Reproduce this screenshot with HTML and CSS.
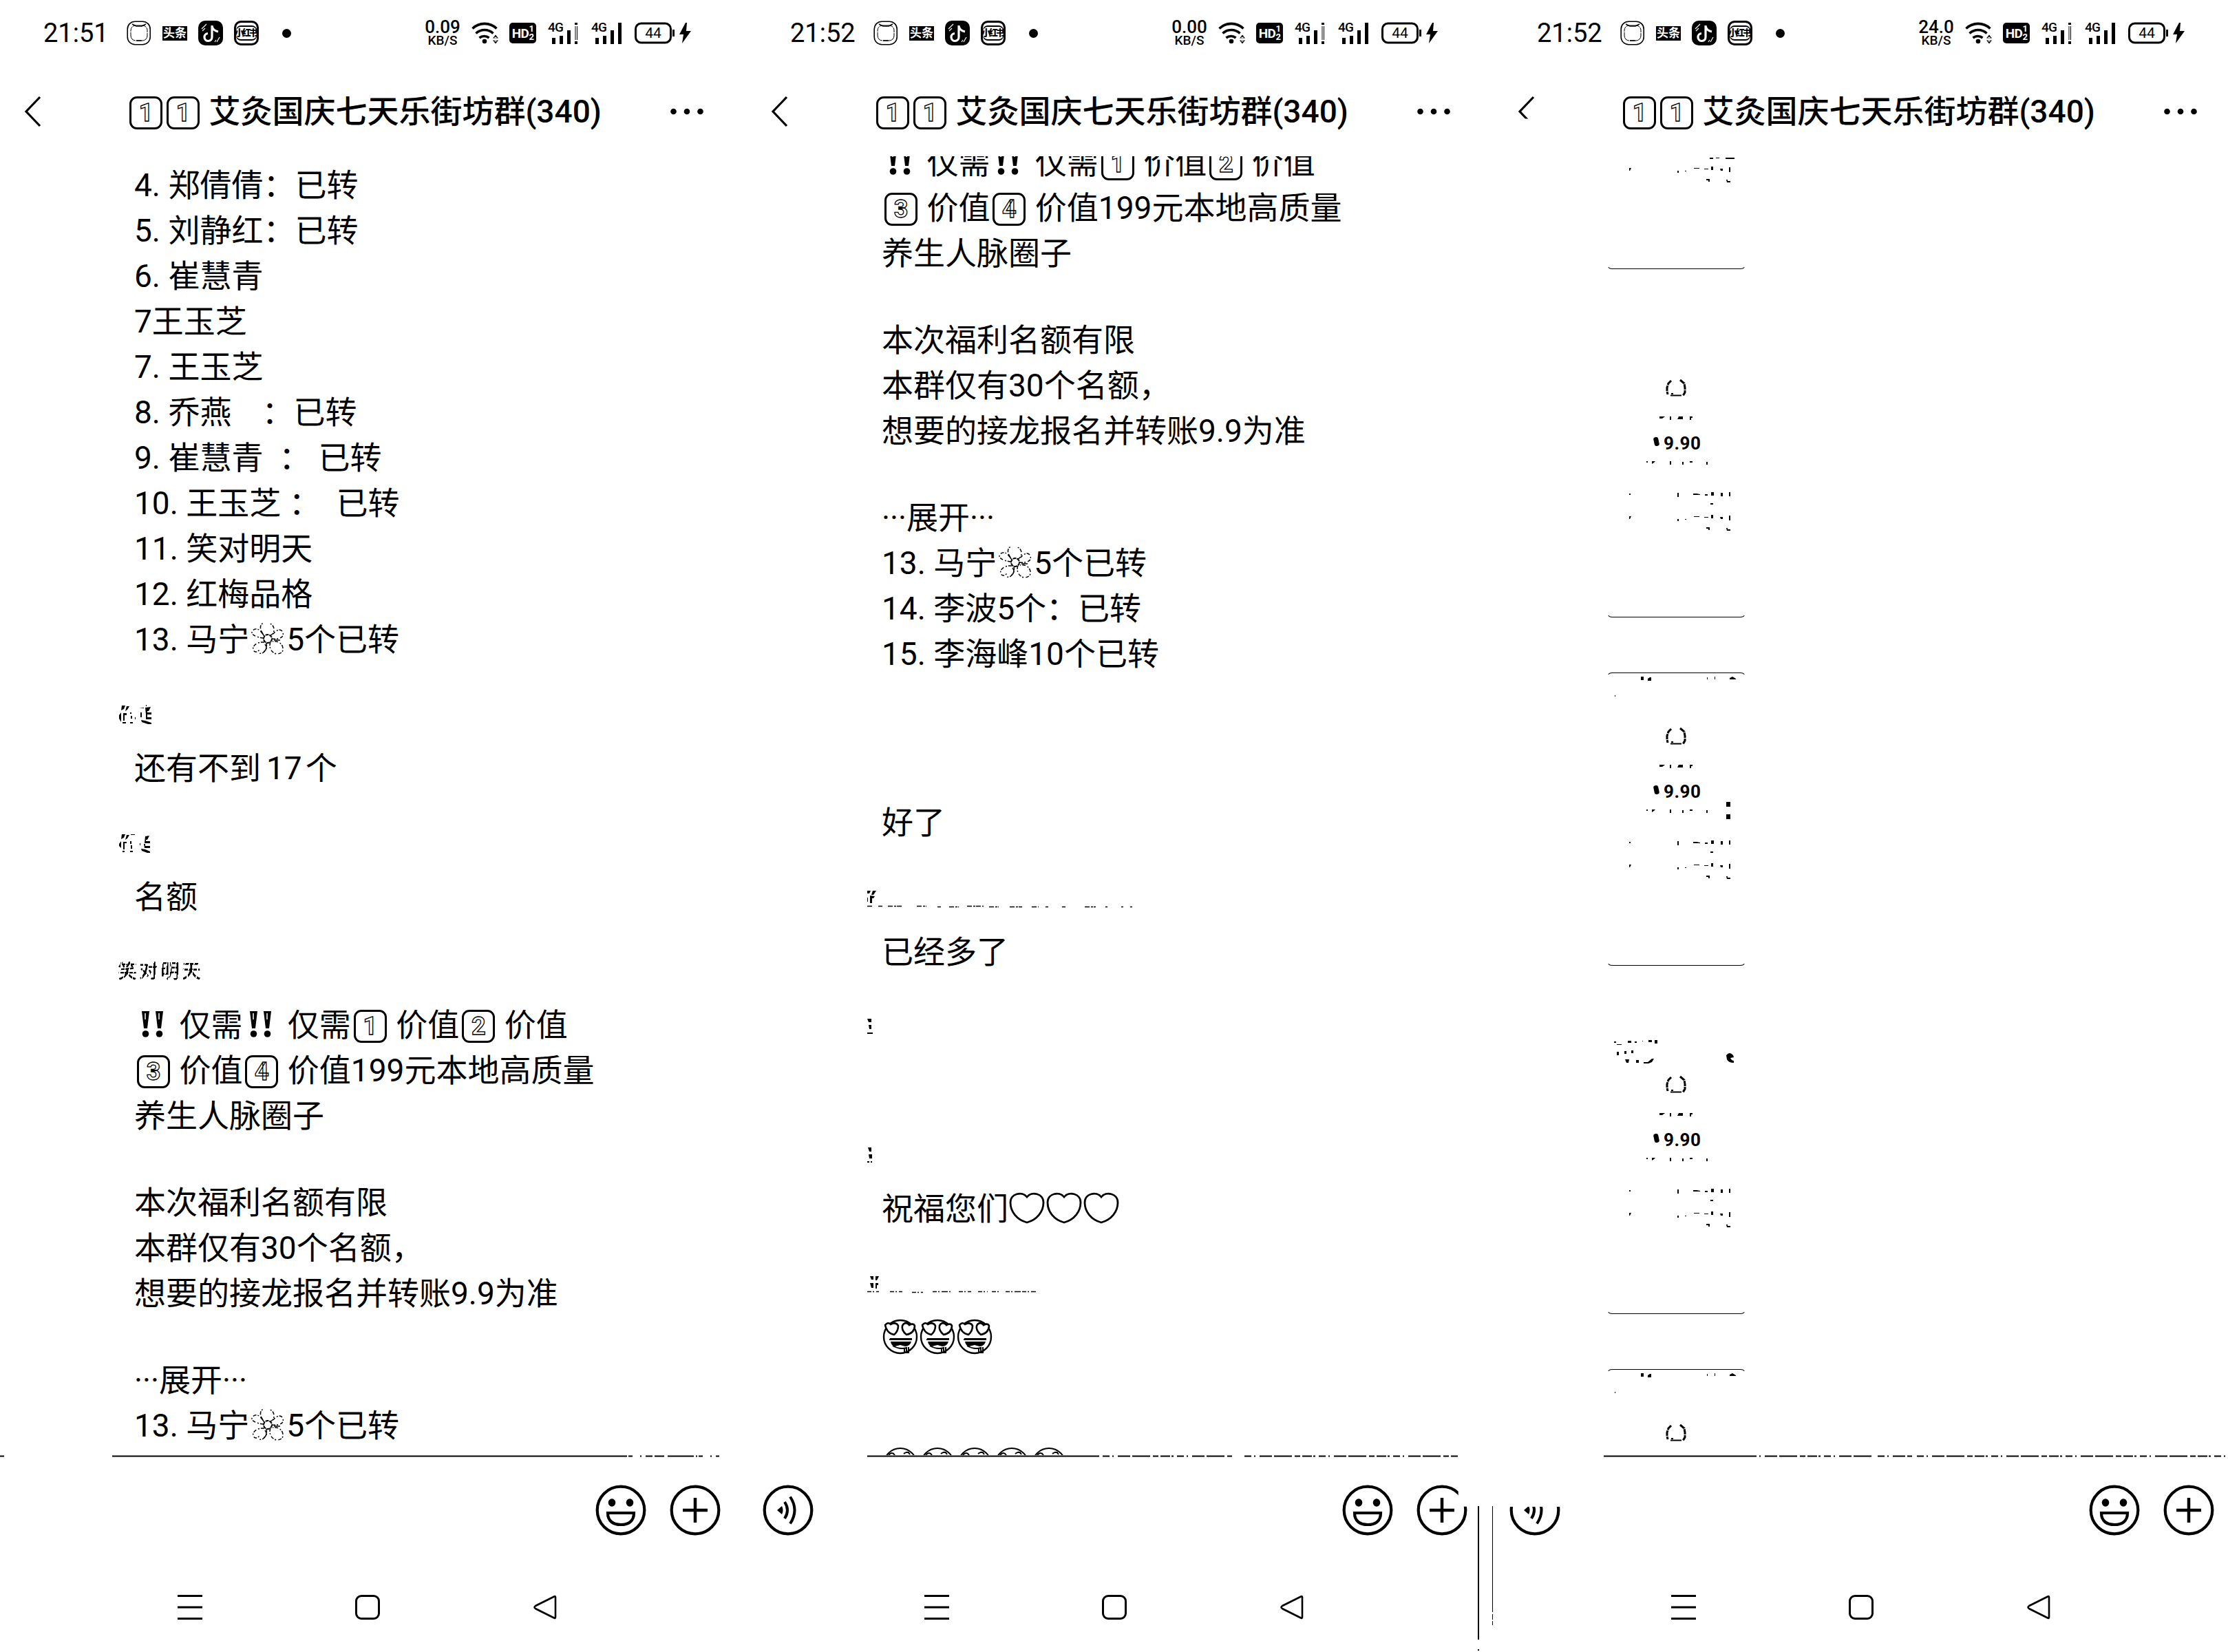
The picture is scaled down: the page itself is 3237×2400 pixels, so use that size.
FILE: index.html
```html
<!DOCTYPE html>
<html lang="zh-CN">
<head>
<meta charset="utf-8">
<title>艾灸国庆七天乐街坊群</title>
<link rel="stylesheet" href="styles.css">
</head>
<body>
<svg class="defs" aria-hidden="true">
  <symbol id="app1" viewBox="0 0 36 36"><rect x="1.2" y="1.2" width="33" height="33.5" rx="11" fill="none" stroke="#000" stroke-width="1.600"/><rect x="6" y="7" width="24" height="22" rx="7" fill="none" stroke="#000" stroke-width="1" stroke-dasharray="16 1 7 1"/><path d="M8 5l6 3h8l6-3M14 29h8" fill="none" stroke="#000" stroke-width="1.500"/></symbol>
  <symbol id="tiktok" viewBox="0 0 36 36"><rect width="36" height="36" rx="10"/><path d="M20 7v17a5.500 5.500 0 1 1-6-5.500M20 8c1 5 4 7 9 8" fill="none" stroke="#fff" stroke-width="3.200"/><path d="M5 12l7-7M6 15l4-4M27 31l4-7M24 31l2-3" stroke="#fff" stroke-width="1.200"/></symbol>
  <symbol id="wifi" viewBox="0 0 42 32"><g fill="none" stroke="#000" stroke-width="3.600"><path d="M1.500 9.500a25 25 0 0 1 35 0"/><path d="M6.500 16.500a18 18 0 0 1 25 0"/><path d="M11.500 23a11 11 0 0 1 14 0"/></g><circle cx="19" cy="28" r="3.300"/><path d="M31 23.500l4-5 4 5zM31 26.500l4 5 4-5z"/><path d="M33.500 22.500h3M33.500 27.500h3" stroke="#fff" stroke-width="1.500"/></symbol>
  <symbol id="bars-low" viewBox="0 0 46 32"><path d="M6 23h5v9H6zM17 20h5v12h-5zM28 12h5v20h-5z"/><path d="M39 1h4v3h-4zM39.500 6h1v20h-1zM42 6h1v20h-1zM39 28h4v4h-4z"/></symbol>
  <symbol id="bars" viewBox="0 0 46 32"><path d="M6 23h5v9H6zM17 20h5v12h-5zM28 12h5v20h-5zM39 1h5v31h-5z"/></symbol>
  <symbol id="battery" viewBox="0 0 84 32"><rect x="1.500" y="2" width="51" height="28" rx="8" fill="none" stroke="#000" stroke-width="3"/><path d="M55 11h3v10h-3z"/><path d="M74 1L65 18h6l-2 13 13-18h-7l1-12z"/></symbol>
  <symbol id="back" viewBox="0 0 26 48"><path d="M23 3L3 24l20 21" fill="none" stroke="#000" stroke-width="3.200"/></symbol>
  <symbol id="more" viewBox="0 0 50 12"><circle cx="5.500" cy="6" r="4.300"/><circle cx="25" cy="6" r="4.300"/><circle cx="44.500" cy="6" r="4.300"/></symbol>
  <symbol id="smile" viewBox="0 0 74 74"><circle cx="37" cy="37" r="34.300" fill="none" stroke="#000" stroke-width="4.200"/><ellipse cx="24" cy="26" rx="5.300" ry="5.800"/><ellipse cx="50" cy="26" rx="5.300" ry="5.800"/><path d="M18 41h38c0 12-8 17-19 17s-19-5-19-17z" fill="none" stroke="#000" stroke-width="4.200"/></symbol>
  <symbol id="plus" viewBox="0 0 74 74"><circle cx="37" cy="37" r="34.300" fill="none" stroke="#000" stroke-width="4.200"/><path d="M19 37h36M37 19v36" stroke="#000" stroke-width="4.500"/></symbol>
  <symbol id="voice" viewBox="0 0 74 74"><circle cx="37" cy="37" r="34.300" fill="none" stroke="#000" stroke-width="4.200"/><path d="M21 37l7-6q3 6 0 12z"/><path d="M32 25q8 12 0 24M40 17.500q13 19.500 0 39" fill="none" stroke="#000" stroke-width="4"/></symbol>
  <symbol id="menu" viewBox="0 0 36 36"><path d="M0 1.500h36M0 18h36M0 34.500h36" stroke="#000" stroke-width="3"/></symbol>
  <symbol id="home" viewBox="0 0 36 36"><rect x="1.500" y="1.500" width="33" height="33" rx="7.500" fill="none" stroke="#000" stroke-width="3"/></symbol>
  <symbol id="prev" viewBox="0 0 36 36"><path d="M33 3.500v29q0 2-2 1L4 20q-3-2 0-4L31 2.500q2-1 2 1z" fill="none" stroke="#000" stroke-width="2.600"/></symbol>
  <symbol id="bang" viewBox="0 0 48 48"><path d="M8 5h11l-3 25h-5zM28 5h11l-3 25h-5z"/><circle cx="13.500" cy="38" r="4.800"/><circle cx="33.500" cy="38" r="4.800"/><path d="M13 8v9M33 8v9" stroke="#fff" stroke-width="1.500"/></symbol>
  <symbol id="flower" viewBox="0 0 48 48"><g fill="none" stroke="#000" stroke-width="1.500"><circle cx="24" cy="24" r="6" stroke-width="2" stroke-dasharray="5 1"/><path stroke-dasharray="5 2 2 3" d="M19 20C10 10 14 1 17 2M28 19c8-3 6-17-2-17M18 23C6 22-2 17 2 12q7-6 14 4M30 24c11 1 18-2 16-9-2-6-9-5-14 2M19 29c-10-1-18 5-16 11 2 5 6 3 9 0M22 30c2 8-3 17-11 15M28 29c-3 6 1 16 9 17 8 0 11-5 8-12-3-5-7-7-14-6"/><path d="M20 32q5 6-2 11M33 26h9M17 17l-3-5"/></g></symbol>
  <symbol id="heart" viewBox="0 0 54 48"><path d="M27 45C12 41 3 29 3 16 3 3 20-1 27 8 34-1 51 3 51 16c0 13-9 25-24 29z" fill="none" stroke="#000" stroke-width="2.800"/></symbol>
  <symbol id="love" viewBox="0 0 52 52"><circle cx="26" cy="26" r="24" fill="none" stroke="#000" stroke-width="2.400"/><g fill="#fff" stroke="#000" stroke-width="2.600"><path d="M17 23C10 22 5 16 4 9q4-5 8-1 8-4 11 2 0 8-6 13zM35 23c-6-5-7-9-6-13 3-6 8-4 10-1q6-3 8 1c0 7-5 12-12 13z"/></g><path d="M11 28h32v3H11zM12 33h30q-2 7-9 7l-7-2-8 2q-5-1-6-7z"/><path d="M10 30h33M15 39q10 6 20 3v7M32 42v7M38 41v8h-6" fill="none" stroke="#000" stroke-width="2"/></symbol>
  <symbol id="blush" viewBox="0 0 52 52"><circle cx="26" cy="26" r="24" fill="none" stroke="#000" stroke-width="2"/><path d="M9 12q5-6 9 0M31 10q6-5 9 1M17 13.500h4M34 8h5" fill="none" stroke="#000" stroke-width="2"/></symbol>
  <symbol id="card-info" viewBox="0 0 203 426"><g fill="none" stroke="#000">
    <path d="M94 82l-4 4-2 6v5l1 5M107 81l6 5 1 6v7l-3 5" stroke-width="3" stroke-dasharray="8 1"/><path d="M93 103.500h16" stroke-width="2"/><path d="M94 101h3" stroke-width="2"/></g>
    <path d="M77 134h8l-4 3h-4zM92 134h2v5h-2zM105 134h6v4h-8zM121 134h4v2h-2v3h-2z"/>
    <path d="M58 199h2v2h-2zM66 199h5l-2 2-3 2zM92 199h2v5h-2zM110 200h2v4h-2zM121 199h4v2h-4zM145 200h2v4h-2z"/>
    <path d="M33 246h2v2h-2zM103 245h2v6h-2zM126 246h5l5 1v1h-10zM143 247h4v2h-4zM152 244h4v5h-4zM166 245h3v5h-3zM178 244h2v6h-2zM151 260h4v2h-4zM33 279h3l-2 4h-1zM103 283h2v3h-2zM114 283h2v1h-2zM127 279h8v1h-8zM142 280h6v1h-6zM152 277h3v5h-3zM165 280h4v3h-3zM178 278h2v7h-2zM145 295h5v4h-2v-2h-3zM174 296h2v2h4v2h-5z"/>
  </symbol>
  <symbol id="card-top" viewBox="0 0 203 426"><path d="M50 6h4v5h-4zM60 9l3-2h2v5h-5zM146 7h1v3h-1zM157 6h1v4h-1zM179 8l4-2 5 3v1h-9zM12 33h1v2h-1z"/></symbol>
</svg>

<main class="shots">
  <section class="phone">
    <header class="status">
      <span class="clock">21:51</span>
      <svg class="app"><use href="#app1"/></svg><span class="toutiao">头条</span><svg class="app"><use href="#tiktok"/></svg><span class="xhs">小红书</span><i class="dot"></i>
      <span class="speed"><b>0.09</b><small>KB/S</small></span>
      <svg class="wifi"><use href="#wifi"/></svg><span class="hd">HD<span class="sims"><i>1</i><i>2</i></span></span>
      <span class="signal"><svg><use href="#bars-low"/></svg><em>4G</em></span><span class="signal"><svg><use href="#bars"/></svg><em>4G</em></span>
      <span class="battery"><svg><use href="#battery"/></svg><em>44</em></span>
    </header>
    <div class="titlebar">
      <svg class="back"><use href="#back"/></svg>
      <h1><span class="key">1</span><span class="key">1</span> 艾灸国庆七天乐街坊群(340)</h1>
      <svg class="more"><use href="#more"/></svg>
    </div>
    <div class="feed feed-a">
      <div class="msg">
        <p>4. 郑倩倩：已转</p><p>5. 刘静红：已转</p><p>6. 崔慧青</p><p>7王玉芝</p><p>7. 王玉芝</p><p>8. 乔燕<span class="gap"></span>：已转</p><p>9. 崔慧青  ： 已转</p><p>10. 王玉芝 ：  已转</p><p>11. 笑对明天</p><p>12. 红梅品格</p><p>13. 马宁<svg class="emo"><use href="#flower"/></svg>5个已转</p>
      </div>
      <svg class="faint" viewBox="0 0 60 30"><path d="M6 1h5l-2 5-4 2zM13 2h4l-3 5-3 2zM2 15l3-4v14l-3-5zM8 12h5v3h-3v8H8zM18 11h2v2h-2zM19 16h2v4h-2zM7 25h5v2H7zM18 25h4v2h-4zM31 5l7-1v1zM33 11h2v7h-2zM40 4l8-1-3 6h-2v2h6v3h-8zM41 14h2v4h6v3h-8zM34 22l6 1 9 3v2h-5l-9-3zM25 18h1v3h-1zM41 0h1v2h-1z"/></svg>
      <div class="msg"><p>还有不到<span class="num">17</span>个</p></div>
      <svg class="faint" viewBox="0 0 60 30"><path d="M6 1h5l-2 5-4 2zM13 2h4l-3 5-3 2zM2 15l3-4v10l-3-3zM8 12h5v2h-3v9H8zM18 11h2v4h-2zM19 17h2v5h-2zM7 25h3v2H7zM18 25h4v2h-4zM19 1h6v1h-6zM32 14h1v3h-1zM40 4l6-1-3 6h-2v2h6v3h-8zM38 15h2v3h7v3h-8zM34 22l6 1 7 3v2h-4l-8-3z"/></svg>
      <div class="msg"><p>名额</p></div>
      <div class="sender">笑对明天</div>
      <div class="msg">
        <p><svg class="emo"><use href="#bang"/></svg> 仅需<svg class="emo"><use href="#bang"/></svg> 仅需<span class="key">1</span> 价值<span class="key">2</span> 价值</p><p><span class="key">3</span> 价值<span class="key">4</span> 价值199元本地高质量</p><p>养生人脉圈子</p><p class="blank"></p><p>本次福利名额有限</p><p>本群仅有30个名额，</p><p>想要的接龙报名并转账9.9为准</p><p class="blank"></p><p><span class="dots">···</span>展开<span class="dots">···</span></p><p>13. 马宁<svg class="emo"><use href="#flower"/></svg>5个已转</p>
      </div>
    </div>
    <svg class="rule" viewBox="0 0 1085 4"><path d="M0 1.500h6M163 1.500h746" stroke="#000" stroke-width="2"/><path d="M909 1.500h136" stroke="#000" stroke-width="2" stroke-dasharray="2 2 6 11 2 6 10 3 14 5 38 3"/></svg>
    <footer class="input"><svg><use href="#smile"/></svg><svg><use href="#plus"/></svg></footer>
    <nav class="nav"><svg><use href="#menu"/></svg><svg><use href="#home"/></svg><svg><use href="#prev"/></svg></nav>
  </section>

  <section class="phone">
    <header class="status">
      <span class="clock">21:52</span>
      <svg class="app"><use href="#app1"/></svg><span class="toutiao">头条</span><svg class="app"><use href="#tiktok"/></svg><span class="xhs">小红书</span><i class="dot"></i>
      <span class="speed"><b>0.00</b><small>KB/S</small></span>
      <svg class="wifi"><use href="#wifi"/></svg><span class="hd">HD<span class="sims"><i>1</i><i>2</i></span></span>
      <span class="signal"><svg><use href="#bars-low"/></svg><em>4G</em></span><span class="signal"><svg><use href="#bars"/></svg><em>4G</em></span>
      <span class="battery"><svg><use href="#battery"/></svg><em>44</em></span>
    </header>
    <div class="titlebar">
      <svg class="back"><use href="#back"/></svg>
      <h1><span class="key">1</span><span class="key">1</span> 艾灸国庆七天乐街坊群(340)</h1>
      <svg class="more"><use href="#more"/></svg>
    </div>
    <div class="feed feed-b">
      <div class="msg">
        <p><svg class="emo"><use href="#bang"/></svg> 仅需<svg class="emo"><use href="#bang"/></svg> 仅需<span class="key">1</span> 价值<span class="key">2</span> 价值</p><p><span class="key">3</span> 价值<span class="key">4</span> 价值199元本地高质量</p><p>养生人脉圈子</p><p class="blank"></p><p>本次福利名额有限</p><p>本群仅有30个名额，</p><p>想要的接龙报名并转账9.9为准</p><p class="blank"></p><p><span class="dots">···</span>展开<span class="dots">···</span></p><p>13. 马宁<svg class="emo"><use href="#flower"/></svg>5个已转</p><p>14. 李波5个：已转</p><p>15. 李海峰10个已转</p>
      </div>
      <div class="msg m-ok"><p>好了</p></div>
      <svg class="trace t1" viewBox="0 0 400 30"><path d="M0 3h5l-2 4H0zM8 3h5l-4 6H6zM4 10l7 1-2 3H7v7H4zM0 13h1v6H0z"/><path d="M0 25.500h8m8 0h6m8 0h22m20 0h14m16 1h5m12 0h14m12-1h24m8 1h14m16 0h18m14 0h10m10 0h4m20 0h5m28 0h16m14 0h3m20 0h3m10 0h3" fill="none" stroke="#000" stroke-width="1.500" stroke-dasharray="7 2 3 1"/></svg>
      <div class="msg m-many"><p>已经多了</p></div>
      <svg class="trace t2" viewBox="0 0 400 30"><path d="M0 3h6v5H2zM2 12h4v6H3zM0 23h8v2H0z"/></svg>
      <svg class="trace t3" viewBox="0 0 400 30"><path d="M1 3h5v6H3zM2 13h5v6H3zM0 23h3v2H0zM5 23h2v2H5z"/></svg>
      <div class="msg m-bless"><p>祝福您们<svg class="emo wide"><use href="#heart"/></svg><svg class="emo wide"><use href="#heart"/></svg><svg class="emo wide"><use href="#heart"/></svg></p></div>
      <svg class="trace t4" viewBox="0 0 400 30"><path d="M4 3h5v5H6zM12 3h5l-3 6h-2zM4 13h5v7H6zM12 13h4v3h-2v5h-2z"/><path d="M0 25.500h17m16 0h18m14 1h16m14-1h26m12 0h18m10 0h14m6 0h10m10 0h44" fill="none" stroke="#000" stroke-width="1.500" stroke-dasharray="6 2 2 3 9 2"/></svg>
      <div class="msg m-face"><p><svg class="emo face"><use href="#love"/></svg><svg class="emo face"><use href="#love"/></svg><svg class="emo face"><use href="#love"/></svg></p></div>
      <div class="msg m-cut"><p><svg class="emo face"><use href="#blush"/></svg><svg class="emo face"><use href="#blush"/></svg><svg class="emo face"><use href="#blush"/></svg><svg class="emo face"><use href="#blush"/></svg><svg class="emo face"><use href="#blush"/></svg></p></div>
    </div>
    <svg class="rule" viewBox="0 0 1085 4"><path d="M175 1.500h337" stroke="#000" stroke-width="2"/><path d="M517 1.500h188M723 1.500h310" stroke="#000" stroke-width="2" stroke-dasharray="10 4 2 6 18 3 26 4 8 3 14 2 3 5"/></svg>
    <footer class="input with-voice"><svg class="voice"><use href="#voice"/></svg><svg><use href="#smile"/></svg><svg class="clipped"><use href="#plus"/></svg></footer>
    <nav class="nav"><svg><use href="#menu"/></svg><svg><use href="#home"/></svg><svg><use href="#prev"/></svg></nav>
    <svg class="seam" viewBox="0 0 24 214"><path d="M2 0v194M2 208v2" stroke="#000" stroke-width="2"/><path d="M22.500 0v154M22.500 157v8M22.500 167v6" stroke="#000" stroke-width="1"/></svg>
  </section>

  <section class="phone last">
    <header class="status">
      <span class="clock">21:52</span>
      <svg class="app"><use href="#app1"/></svg><span class="toutiao">头条</span><svg class="app"><use href="#tiktok"/></svg><span class="xhs">小红书</span><i class="dot"></i>
      <span class="speed"><b>24.0</b><small>KB/S</small></span>
      <svg class="wifi"><use href="#wifi"/></svg><span class="hd">HD<span class="sims"><i>1</i><i>2</i></span></span>
      <span class="signal"><svg><use href="#bars-low"/></svg><em>4G</em></span><span class="signal"><svg><use href="#bars"/></svg><em>4G</em></span>
      <span class="battery"><svg><use href="#battery"/></svg><em>44</em></span>
    </header>
    <div class="titlebar">
      <svg class="back short"><use href="#back"/></svg>
      <h1><span class="key">1</span><span class="key">1</span> 艾灸国庆七天乐街坊群(340)</h1>
      <svg class="more"><use href="#more"/></svg>
    </div>
    <div class="feed feed-c">
      <article class="card open"><svg viewBox="0 0 203 426"><use href="#card-info"/><path d="M150 264h5v2h-5zM159 264h5v1h-5zM173 264h13v2h-13z"/></svg></article>
      <article class="card open"><svg viewBox="0 0 203 426"><use href="#card-info"/></svg><span class="price">9.90</span></article>
      <article class="card"><svg viewBox="0 0 203 426"><use href="#card-info"/><use href="#card-top"/><path d="M174 188h6v7h-6zM174 206h6v7h-6z"/></svg><span class="price">9.90</span></article>
      <article class="card open"><svg viewBox="0 0 203 426"><use href="#card-info"/><path d="M11 30h3v2h-3zM15 34h7v1h-7zM31 29h5v3h-5zM41 30h3v2h-3zM52 29h1v1h-1zM61 28h5v3h-5zM70 28h4v5h-4zM15 45h3v5h-3zM26 44h3v4h-3zM36 43h3v4h-3zM27 56h6l-1 5h-3zM43 57h4v4h-4zM54 60h6l6-5h3l-3 5-5 2h-7z"/><path d="M174 50q5-6 10 0l1 3-5 1q2 4 5 4v3q-8 0-10-5z"/></svg><span class="price">9.90</span></article>
      <article class="card"><svg viewBox="0 0 203 426"><use href="#card-info"/><use href="#card-top"/></svg></article>
    </div>
    <svg class="rule" viewBox="0 0 1085 4"><path d="M160 1.500h212" stroke="#000" stroke-width="2"/><path d="M372 1.500h180M558 1.500h50M615 1.500h452" stroke="#000" stroke-width="2" stroke-dasharray="10 4 2 6 18 3 26 4 8 3 14 2 3 5"/></svg>
    <footer class="input with-voice"><svg class="voice cut-top"><use href="#voice"/></svg><svg><use href="#smile"/></svg><svg><use href="#plus"/></svg></footer>
    <nav class="nav"><svg><use href="#menu"/></svg><svg><use href="#home"/></svg><svg><use href="#prev"/></svg></nav>
  </section>
</main>
</body>
</html>
```
FILE: styles.css
```css
* { box-sizing: border-box; }
body { margin: 0; background: #fff; color: #000; font-family: Roboto, "Noto Sans CJK SC", sans-serif; }
p, h1 { margin: 0; }
i, em { font-style: normal; }
svg { display: block; flex: none; }
.defs { position: absolute; width: 0; height: 0; }

.shots { display: grid; grid-template-columns: 1085px 1085px 1067px; width: 3237px; height: 2400px; overflow: hidden; }
.phone { position: relative; display: flex; flex-direction: column; height: 2400px; min-width: 0; }

/* status bar */
.status { display: flex; align-items: center; width: 1085px; height: 96px; padding-left: 63px; flex: none; }
.clock { width: 121px; font-size: 38px; line-height: 44px; }
.app { width: 36px; height: 36px; }
.toutiao { width: 36px; height: 21px; margin: 0 16px; background: #000; color: #fff; font-size: 17px; font-weight: 700; line-height: 20px; text-align: center; }
.xhs { display: flex; align-items: center; justify-content: center; width: 36px; height: 36px; margin-left: 16px; border: 3px solid #000; border-radius: 10px; box-shadow: inset 0 4px 0 #fff, inset 0 -4px 0 #fff, inset 0 6px 0 #000, inset 0 -6px 0 #000; font-size: 13px; font-weight: 900; line-height: 16px; white-space: nowrap; letter-spacing: -2.500px; text-indent: -2px; }
.dot { width: 13px; height: 13px; margin-left: 34px; border-radius: 50%; background: #000; }
.speed { display: flex; flex-direction: column; align-items: center; width: 54px; margin-left: 193px; }
.speed b { font-size: 26px; font-weight: 500; line-height: 21px; }
.speed small { font-size: 19px; font-weight: 500; line-height: 18px; }
.wifi { width: 42px; height: 32px; margin-left: 15px; }
.hd { display: flex; align-items: center; justify-content: center; width: 39px; height: 30px; margin-left: 13px; border-radius: 5px; background: #000; color: #fff; font-size: 19px; font-weight: 700; letter-spacing: -.5px; }
.sims { display: flex; flex-direction: column; font-size: 13px; line-height: 12px; }
.signal { position: relative; width: 46px; height: 32px; margin-left: 17px; }
.signal svg { width: 46px; height: 32px; }
.signal em { position: absolute; left: 0; top: 0; font-size: 19px; font-weight: 500; line-height: 15px; letter-spacing: -.8px; }
.battery { position: relative; width: 84px; height: 32px; margin-left: 17px; }
.battery svg { width: 84px; height: 32px; }
.battery em { position: absolute; left: 0; top: 0; width: 54px; font-size: 21px; line-height: 33px; text-align: center; }

/* chat title */
.titlebar { display: flex; align-items: center; height: 131px; padding: 0 0 0 35px; flex: none; }
.back { width: 26px; height: 48px; }
.back.short { clip-path: inset(0 0 13px 0); }
h1 { width: 783px; margin-left: 123px; font-size: 46px; font-weight: 500; line-height: 66px; white-space: pre; }
.more { width: 50px; height: 12px; margin-left: 6px; }

.key { display: inline-block; width: 48px; height: 48px; margin: 0 2px 0 4px; border: 3px solid #000; border-radius: 11px; color: #fff; -webkit-text-stroke: 1.3px #000; font-size: 36px; font-weight: 700; line-height: 43px; text-align: center; vertical-align: 2px; }

/* messages */
.feed { height: 1887px; overflow: hidden; flex: none; }
.msg { padding-left: 195px; font-size: 46px; line-height: 66px; }
.msg p { height: 66px; white-space: pre; }
.msg .blank { height: 60px; }
.emo { display: inline-block; width: 48px; height: 48px; margin: 0 3px; vertical-align: -7px; }
.emo.wide { width: 54px; margin: 0; }
.emo.face { width: 52px; height: 52px; margin: 0 1px; vertical-align: -9px; }
.gap { display: inline-block; width: 44px; }
.num { margin: 0 5px 0 8px; }
.dots { display: inline-block; width: 36px; }
.faint { width: 60px; height: 30px; margin: 62px 0 29px 171px; }
.sender { width: 140px; height: 30px; margin: 61px 0 29px 171px; font-size: 28px; font-weight: 500; letter-spacing: 3px; line-height: 30px; color: transparent; background: repeating-linear-gradient(100deg, #000 0 5px, #fff 5px 6.500px); -webkit-background-clip: text; background-clip: text; }
.feed-a { padding-top: 9px; }
.feed-b .msg { padding-left: 196px; }
.feed-b .msg:first-child { margin-top: -24px; }
.trace { width: 400px; height: 30px; margin-left: 175px; }
.m-ok { margin-top: 179px; }
.t1 { margin-top: 63px; }
.m-many { margin-top: 29px; }
.t2 { margin-top: 61px; }
.t3 { margin-top: 157px; }
.m-bless { margin-top: 29px; }
.t4 { margin-top: 62px; }
.m-face { margin-top: 29px; }
.m-cut { margin-top: 120px; }

/* transfer cards */
.card { position: relative; width: 203px; height: 426px; margin: 0 0 80px 164px; border: 1.500px solid; border-color: #000 transparent; border-radius: 8px; }
.card.open { border-top-color: transparent; }
.card:first-child { margin-top: -262px; }
.card svg { width: 203px; height: 426px; margin: -1px; overflow: visible; }
.price { position: absolute; left: 82px; top: 158px; font-size: 26px; font-weight: 700; line-height: 28px; letter-spacing: .5px; }
.price::before { content: ""; position: absolute; left: -14px; top: 5px; width: 7px; height: 13px; border-radius: 3px; background: #000; transform: rotate(-12deg); }

.rule { width: 1085px; height: 4px; }
.input { display: flex; gap: 34px; height: 152px; padding: 39px 0 0 865px; flex: none; }
.input svg { width: 74px; height: 74px; }
.input.with-voice { padding-left: 23px; }
.input .voice { margin-right: 734px; }
.input .clipped { clip-path: polygon(0 0, 82% 0, 82% 43%, 100% 43%, 100% 100%, 0 100%); }
.input .cut-top { clip-path: inset(32px 0 0 0); }
.nav { display: flex; gap: 222px; padding: 47px 0 0 258px; }
.nav svg { width: 36px; height: 36px; }

/* stitching seam between the second and third screens */
.seam { position: absolute; left: 1061px; top: 2188px; width: 24px; height: 214px; }
```
